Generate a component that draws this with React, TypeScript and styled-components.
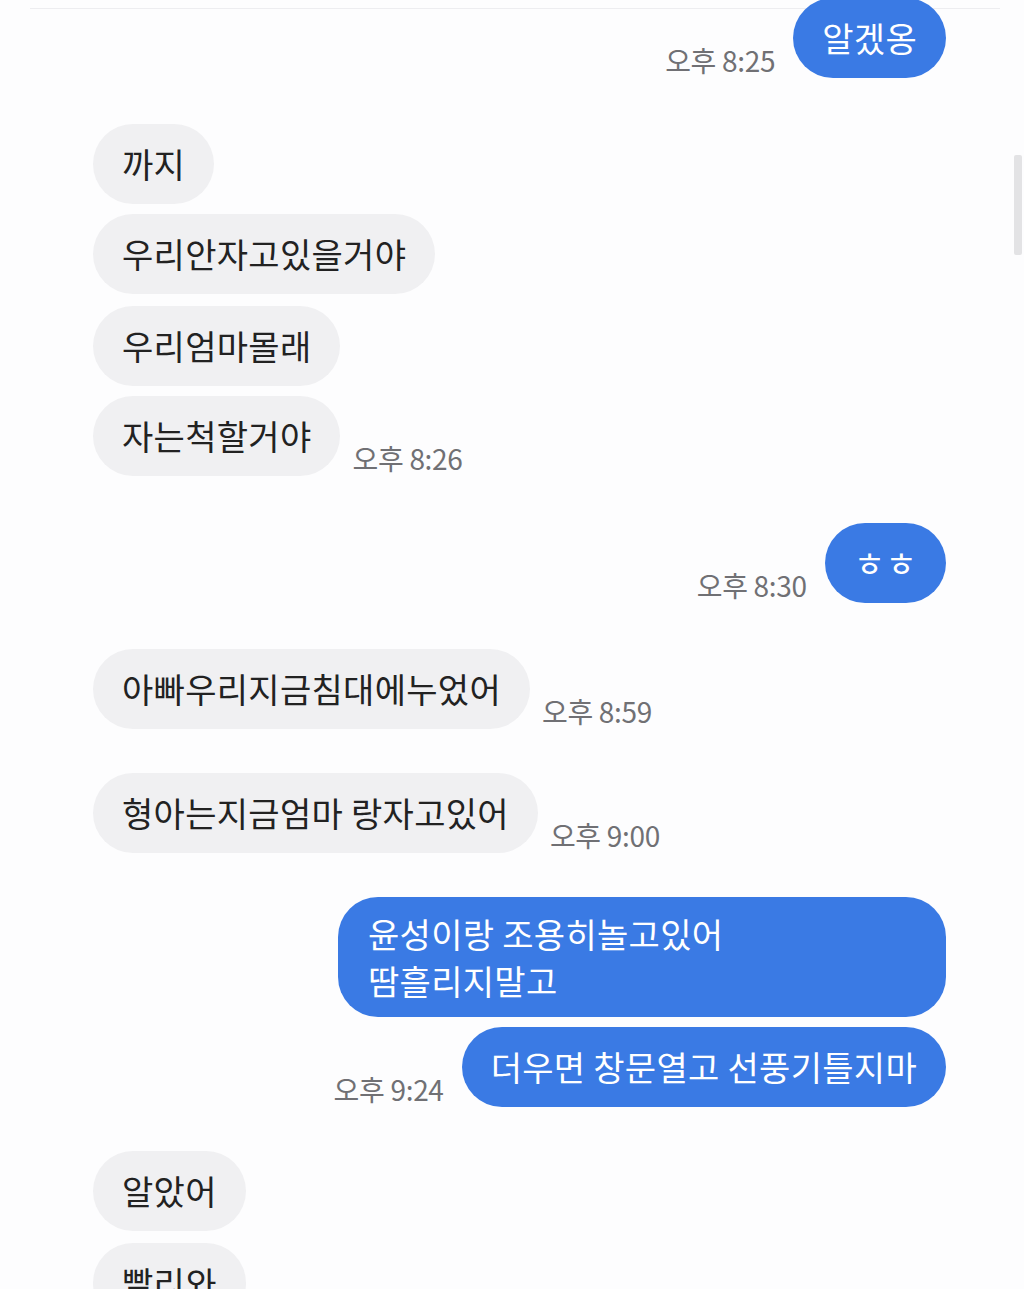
import React from "react";
import styled, { createGlobalStyle } from "styled-components";

const Global = createGlobalStyle`
  html, body {
    margin: 0;
    padding: 0;
    background: #fdfdfe;
    overflow: hidden;
  }
  body {
    font-family: "Noto Sans CJK KR", "Noto Sans", sans-serif;
  }
`;

const Page = styled.div`
  width: 1024px;
  height: 1289px;
  overflow: hidden;
  position: relative;
  background: #fdfdfe;
`;

const Panel = styled.div`
  margin: 8px 24px 0 30px;
  border-top: 1px solid #ededf0;
  display: flex;
  flex-direction: column;
`;

const Row = styled.div<{ $mine?: boolean; $gap: number }>`
  display: flex;
  flex-direction: ${(p) => (p.$mine ? "row-reverse" : "row")};
  align-items: flex-end;
  gap: ${(p) => (p.$mine ? 18 : 12)}px;
  margin-top: ${(p) => p.$gap}px;
  padding: 0 54px 0 63px;
`;

const Bubble = styled.div<{ $mine?: boolean; $multi?: boolean; $w?: number }>`
  box-sizing: border-box;
  background: ${(p) => (p.$mine ? "#3a7ae4" : "#f0f0f2")};
  color: ${(p) => (p.$mine ? "#ffffff" : "#222222")};
  font-size: 34px;
  line-height: ${(p) => (p.$multi ? "47px" : "40px")};
  padding: ${(p) => (p.$multi ? "13px 30px" : "20px 29px")};
  border-radius: 40px;
  white-space: pre;
  letter-spacing: 0.3px;
  ${(p) => (p.$w ? `width: ${p.$w}px;` : "")}
`;

const Time = styled.span`
  font-size: 28px;
  line-height: 30px;
  color: #707074;
  margin-bottom: 3px;
  letter-spacing: -0.3px;
  white-space: nowrap;
`;

const Scrollbar = styled.div`
  position: absolute;
  left: 1014px;
  top: 155px;
  width: 8px;
  height: 100px;
  background: #e3e3e5;
  border-radius: 2px;
`;

type Msg = { text: string; mine?: boolean; time?: string; gap: number; multi?: boolean; w?: number };

const messages: Msg[] = [
  { text: "알겠옹", mine: true, time: "오후 8:25", gap: -11 },
  { text: "까지", gap: 46 },
  { text: "우리안자고있을거야", gap: 10 },
  { text: "우리엄마몰래", gap: 12 },
  { text: "자는척할거야", time: "오후 8:26", gap: 10 },
  { text: "ㅎㅎ", mine: true, time: "오후 8:30", gap: 47 },
  { text: "아빠우리지금침대에누었어", time: "오후 8:59", gap: 46 },
  { text: "형아는지금엄마 랑자고있어", time: "오후 9:00", gap: 44 },
  { text: "윤성이랑 조용히놀고있어\n땀흘리지말고", mine: true, gap: 44, multi: true, w: 608 },
  { text: "더우면 창문열고 선풍기틀지마", mine: true, time: "오후 9:24", gap: 10 },
  { text: "알았어", gap: 44 },
  { text: "빨리와", gap: 12 },
];

export default function App() {
  return (
    <Page>
      <Global />
      <Panel>
        {messages.map((m, i) => (
          <Row key={i} $mine={m.mine} $gap={m.gap}>
            <Bubble $mine={m.mine} $multi={m.multi} $w={m.w}>
              {m.text}
            </Bubble>
            {m.time && <Time>{m.time}</Time>}
          </Row>
        ))}
      </Panel>
      <Scrollbar />
    </Page>
  );
}
